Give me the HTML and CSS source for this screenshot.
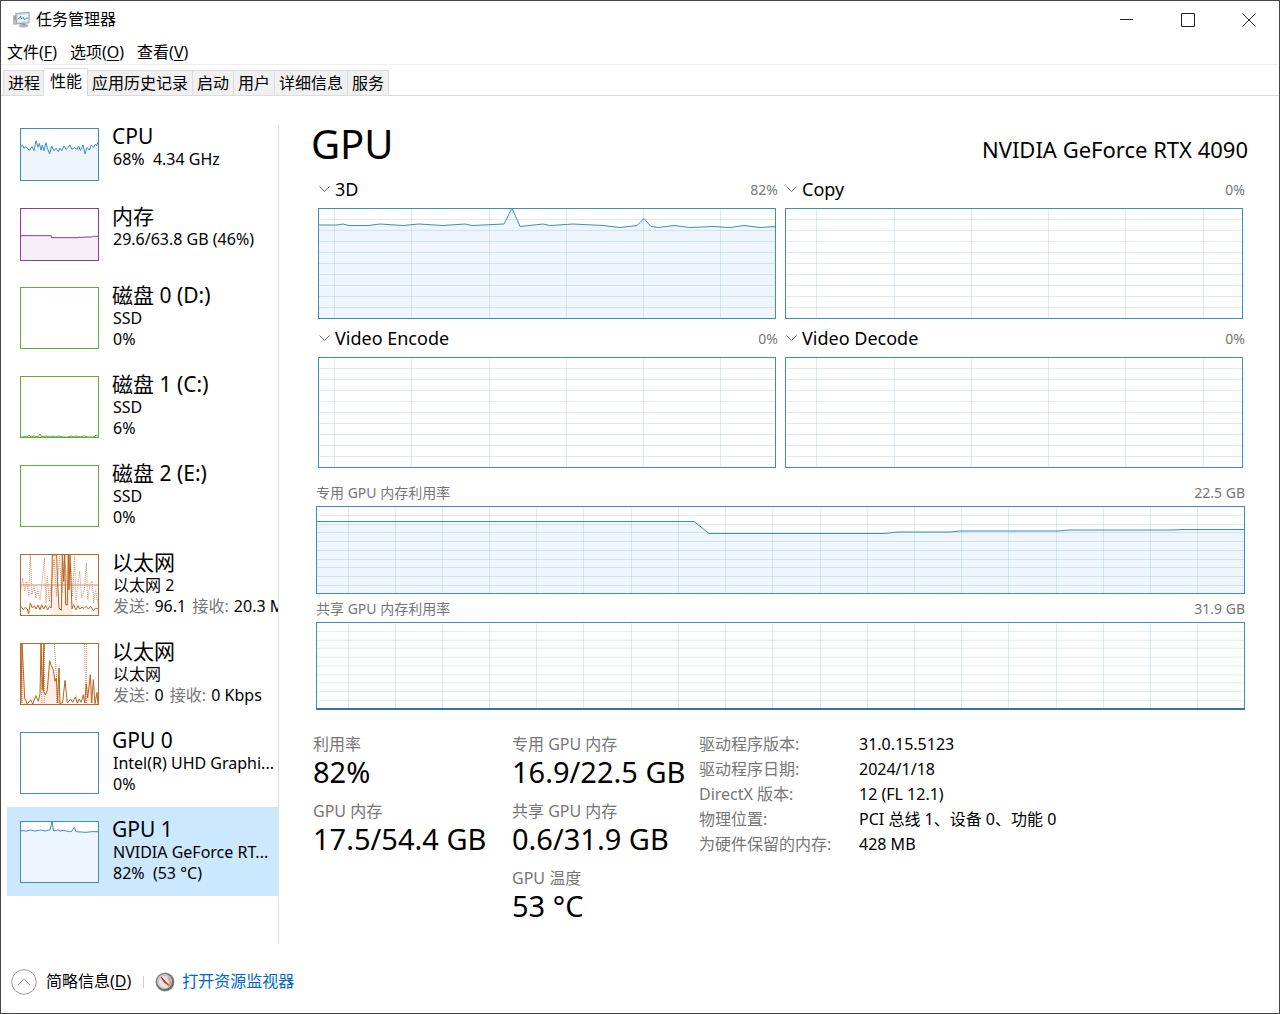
FILE: index.html
```html
<!DOCTYPE html>
<html lang="zh-CN">
<head>
<meta charset="utf-8">
<meta name="viewport" content="width=device-width, initial-scale=1">
<title>任务管理器</title>
<link rel="stylesheet" href="styles.css">
</head>
<body>
<div class="window">
  <header class="titlebar">
    <svg class="app-icon" viewBox="0 0 20 18" aria-hidden="true">
      <path d="M1 4h4v10H1z" fill="#b9bcbe"/><path d="M2 6h2M2 8h2" stroke="#777"/>
      <path d="M4 2l14-1v11L5 13z" fill="#d5d9dc" stroke="#9a9fa3"/>
      <path d="M6 4l11-1v7L6 11z" fill="#e9f7fd"/>
      <path d="M6 8l2-1 1-2 1 3 2-2 1 3 2-2 2 0" fill="none" stroke="#2a93c9"/>
      <ellipse cx="12" cy="15" rx="5" ry="2" fill="#b5b8ba"/><path d="M10 12h4v3h-4z" fill="#9fa3a6"/>
    </svg>
    <h1 class="app-title">任务管理器</h1>
    <div class="window-buttons">
      <button class="window-button" aria-label="最小化"><svg viewBox="0 0 14 14"><path d="M0 6.500h13"/></svg></button>
      <button class="window-button" aria-label="最大化"><svg viewBox="0 0 14 14"><path d="M.5.5h13v13H.5z"/></svg></button>
      <button class="window-button" aria-label="关闭"><svg viewBox="0 0 14 14"><path d="M.5.5l13 13M13.500.5l-13 13"/></svg></button>
    </div>
  </header>

  <nav class="menubar" aria-label="菜单">
    <button>文件(<u>F</u>)</button>
    <button>选项(<u>O</u>)</button>
    <button>查看(<u>V</u>)</button>
  </nav>

  <div class="tabs" role="tablist">
    <button role="tab">进程</button>
    <button role="tab" class="active" aria-selected="true">性能</button>
    <button role="tab">应用历史记录</button>
    <button role="tab">启动</button>
    <button role="tab">用户</button>
    <button role="tab">详细信息</button>
    <button role="tab">服务</button>
  </div>

  <div class="content">
    <aside class="sidebar">
      <button class="device">
        <svg class="thumb short blue" viewBox="63 57 231 153" preserveAspectRatio="none">
          <path class="area" d="M60 115H297V213H60z"/>
          <path class="line" d="M60 113L68 105 72 115 78 110 84 118 90 120 96 110 102 122 108 92 114 112 118 100 123 120 127 105 132 122 138 98 143 118 149 132 155 108 162 122 168 115 175 125 180 115 185 122 192 108 198 118 205 112 210 105 216 118 224 112 230 118 236 108 241 122 249 105 255 132 261 112 268 120 274 105 280 112 286 102 290 108 294 96"/>
        </svg>
        <span class="device-text"><strong>CPU</strong><span>68%&nbsp; 4.34 GHz</span></span>
      </button>
      <button class="device">
        <svg class="thumb short purple" viewBox="63 296 231 153" preserveAspectRatio="none">
          <path class="area" d="M60 376H154V382H234L280 378H297V452H60z"/>
          <path class="line" d="M60 376H154V382H234V381L275 380 280 378H297"/>
        </svg>
        <span class="device-text"><strong>内存</strong><span>29.6/63.8 GB (46%)</span></span>
      </button>
      <button class="device">
        <svg class="thumb green" viewBox="0 0 77 60"></svg>
        <span class="device-text"><strong>磁盘 0 (D:)</strong><span>SSD</span><span>0%</span></span>
      </button>
      <button class="device">
        <svg class="thumb green" viewBox="0 0 77 60" preserveAspectRatio="none">
          <path class="line" d="M0 60L2 60 4 59 6 60 8 58 10 60 13 59 17 60 19 57 21 60 25 59 29 60 31 59 35 60 37 59 43 60 47 60 50 59 53 60 55 59 59 60 63 59 67 60 73 60 75 58 77 59"/>
        </svg>
        <span class="device-text"><strong>磁盘 1 (C:)</strong><span>SSD</span><span>6%</span></span>
      </button>
      <button class="device">
        <svg class="thumb green" viewBox="0 0 77 60"></svg>
        <span class="device-text"><strong>磁盘 2 (E:)</strong><span>SSD</span><span>0%</span></span>
      </button>
      <button class="device">
        <svg class="thumb orange" viewBox="63 46 231 180" preserveAspectRatio="none">
          <path class="area" d="M154 226V46H170L177 210 184 212 186 46H210L216 226z"/>
          <path class="rule" d="M60 136H297"/>
          <path class="dotted" d="M63 150L68 115 74 155 80 125 86 170 91 46 96 165 102 140 108 175 114 150 120 180 127 120 133 55 138 190 142 110 148 185 156 120 162 60 170 170 178 50 186 160 193 50 204 150 212 70 218 170 224 50 228 185 234 130 239 95 245 175 253 150 259 70 263 180 270 130 277 125 281 190 287 150 294 195"/>
          <path class="line" d="M63 200L70 210 76 203 82 208 86 222 91 190 97 205 103 198 108 208 114 196 120 210 125 195 131 208 137 197 143 210 149 200 154 205 157 46H170L172 110 177 205 184 212 187 46 191 125 194 46 197 195 202 196 205 46 207 150 210 46 216 208 221 195 228 210 234 198 239 208 246 203 252 206 258 200 265 208 272 200 280 212 287 206 294 208"/>
        </svg>
        <span class="device-text"><strong>以太网</strong><span>以太网 2</span><span><i>发送:</i> 96.1 <i>接收:</i> 20.3 Mbps</span></span>
      </button>
      <button class="device">
        <svg class="thumb orange" viewBox="63 313 231 180" preserveAspectRatio="none">
          <path class="area" d="M63 493V313H68L76 493zM118 493L122 313H127L132 460 140 465 149 363 160 390 170 430 178 493zM250 493L257 430 263 480 271 405 280 493z"/>
          <path class="dotted" d="M66 313V493M125 313V493M133 313V493M163 313L170 420V493M178 380V493M228 465L235 490M254 313L257 493M260 313V493"/>
          <path class="line" d="M63 490L66 313 70 390 74 475 82 493 92 480 98 493 108 468 115 485 120 462 123 313 127 450 132 313 130 455 137 465 142 450 149 363 154 378 160 390 165 425 169 415 173 490 177 385 180 492 188 488 195 422 202 490 212 478 218 488 226 472 232 490 238 478 243 488 250 465 254 490 259 432 263 475 271 405 275 490 280 420 285 492 291 458 294 493"/>
        </svg>
        <span class="device-text"><strong>以太网</strong><span>以太网</span><span><i>发送:</i> 0 <i>接收:</i> 0 Kbps</span></span>
      </button>
      <button class="device">
        <svg class="thumb blue" viewBox="0 0 77 60"></svg>
        <span class="device-text"><strong>GPU 0</strong><span>Intel(R) UHD Graphi...</span><span>0%</span></span>
      </button>
      <button class="device selected" aria-current="true">
        <svg class="thumb blue" viewBox="63 307 231 180" preserveAspectRatio="none">
          <path class="area" d="M60 333H150L156 305 161 333H218L223 323 228 336H297V490H60z"/>
          <path class="line" d="M60 333L80 334 92 331 105 334 122 331 135 334 145 331 150 332 156 305 161 334 173 331 180 334 190 332 208 336 216 334 223 323 228 336 258 338 275 336 297 336"/>
        </svg>
        <span class="device-text"><strong>GPU 1</strong><span>NVIDIA GeForce RT...</span><span>82%&nbsp; (53 °C)</span></span>
      </button>
    </aside>

    <main class="details">
      <div class="heading">
        <h2>GPU</h2>
        <p>NVIDIA GeForce RTX 4090</p>
      </div>

      <div class="engines">
        <section class="engine">
          <div class="engine-head"><button><svg class="chevron" viewBox="0 0 11 7"><path d="M.5.5l5 5 5-5"/></svg>3D</button><span>82%</span></div>
          <svg class="chart" viewBox="1 1 456 109" preserveAspectRatio="none">
            <path class="area" d="M0 17L19 17 25 16 31 17.500 50 17.500 62 16 85 17.500 101 16 125 17.500 147 16 154 17.500 186 16 194 0 202 18.500 225 16 232 17.500 255 16 285 17.500 302 19.500 319 17.500 326 10.500 333 18.500 340 19.500 356 17.500 372 19.500 395 18.500 412 19.500 426 17.500 442 19.500 458 18.500V111H0z"/>
            <path class="grid" d="M0 11.500H458M0 22.500H458M0 33.500H458M0 44.500H458M0 55.500H458M0 66.500H458M0 77.500H458M0 88.500H458M0 99.500H458M16.500 0V111M93.500 0V111M171.500 0V111M248.500 0V111M325.500 0V111M402.500 0V111"/>
            <path class="line" d="M0 17L19 17 25 16 31 17.500 50 17.500 62 16 85 17.500 101 16 125 17.500 147 16 154 17.500 186 16 194 0 202 18.500 225 16 232 17.500 255 16 285 17.500 302 19.500 319 17.500 326 10.500 333 18.500 340 19.500 356 17.500 372 19.500 395 18.500 412 19.500 426 17.500 442 19.500 458 18.500"/>
          </svg>
        </section>
        <section class="engine">
          <div class="engine-head"><button><svg class="chevron" viewBox="0 0 11 7"><path d="M.5.5l5 5 5-5"/></svg>Copy</button><span>0%</span></div>
          <svg class="chart" viewBox="1 1 456 109" preserveAspectRatio="none">
            <path class="grid" d="M0 11.500H458M0 22.500H458M0 33.500H458M0 44.500H458M0 55.500H458M0 66.500H458M0 77.500H458M0 88.500H458M0 99.500H458M31.500 0V111M109.500 0V111M186.500 0V111M263.500 0V111M340.500 0V111M418.500 0V111"/>
          </svg>
        </section>
        <section class="engine">
          <div class="engine-head"><button><svg class="chevron" viewBox="0 0 11 7"><path d="M.5.5l5 5 5-5"/></svg>Video Encode</button><span>0%</span></div>
          <svg class="chart" viewBox="1 1 456 109" preserveAspectRatio="none">
            <path class="grid" d="M0 11.500H458M0 22.500H458M0 33.500H458M0 44.500H458M0 55.500H458M0 66.500H458M0 77.500H458M0 88.500H458M0 99.500H458M16.500 0V111M93.500 0V111M171.500 0V111M248.500 0V111M325.500 0V111M402.500 0V111"/>
          </svg>
        </section>
        <section class="engine">
          <div class="engine-head"><button><svg class="chevron" viewBox="0 0 11 7"><path d="M.5.5l5 5 5-5"/></svg>Video Decode</button><span>0%</span></div>
          <svg class="chart" viewBox="1 1 456 109" preserveAspectRatio="none">
            <path class="grid" d="M0 11.500H458M0 22.500H458M0 33.500H458M0 44.500H458M0 55.500H458M0 66.500H458M0 77.500H458M0 88.500H458M0 99.500H458M31.500 0V111M109.500 0V111M186.500 0V111M263.500 0V111M340.500 0V111M418.500 0V111"/>
          </svg>
        </section>
      </div>

      <div class="memory">
        <div class="memory-head"><span>专用 GPU 内存利用率</span><span>22.5 GB</span></div>
        <svg class="chart wide" viewBox="1 1 927 86" preserveAspectRatio="none">
          <path class="area" d="M0 15.500H378L393 27.500H569L582 26H634L644 25H741L754 24H857L867 23.500H930V90H0z"/>
          <path class="grid" d="M0 9.500H929M0 18.500H929M0 26.500H929M0 35.500H929M0 44.500H929M0 53.500H929M0 61.500H929M0 70.500H929M0 79.500H929M32.500 0V88M79.500 0V88M126.500 0V88M173.500 0V88M220.500 0V88M267.500 0V88M315.500 0V88M362.500 0V88M409.500 0V88M456.500 0V88M504.500 0V88M551.500 0V88M598.500 0V88M645.500 0V88M692.500 0V88M740.500 0V88M787.500 0V88M834.500 0V88M881.500 0V88"/>
          <path class="line" d="M0 15.500H378L393 27.500H569L582 26H634L644 25H741L754 24H857L867 23.500H930"/>
        </svg>
        <div class="memory-head"><span>共享 GPU 内存利用率</span><span>31.9 GB</span></div>
        <svg class="chart wide shared" viewBox="1 1 927 86" preserveAspectRatio="none">
          <path class="grid" d="M0 9.500H929M0 18.500H929M0 26.500H929M0 35.500H929M0 44.500H929M0 53.500H929M0 61.500H929M0 70.500H929M0 79.500H929M32.500 0V88M79.500 0V88M126.500 0V88M173.500 0V88M220.500 0V88M267.500 0V88M315.500 0V88M362.500 0V88M409.500 0V88M456.500 0V88M504.500 0V88M551.500 0V88M598.500 0V88M645.500 0V88M692.500 0V88M740.500 0V88M787.500 0V88M834.500 0V88M881.500 0V88"/>
        </svg>
      </div>

      <div class="stats">
        <dl class="figures">
          <dt>利用率</dt><dd>82%</dd>
          <dt>GPU 内存</dt><dd>17.5/54.4 GB</dd>
        </dl>
        <dl class="figures">
          <dt>专用 GPU 内存</dt><dd>16.9/22.5 GB</dd>
          <dt>共享 GPU 内存</dt><dd>0.6/31.9 GB</dd>
          <dt>GPU 温度</dt><dd>53 °C</dd>
        </dl>
        <table class="facts">
          <tbody>
            <tr><th scope="row">驱动程序版本:</th><td>31.0.15.5123</td></tr>
            <tr><th scope="row">驱动程序日期:</th><td>2024/1/18</td></tr>
            <tr><th scope="row">DirectX 版本:</th><td>12 (FL 12.1)</td></tr>
            <tr><th scope="row">物理位置:</th><td>PCI 总线 1、设备 0、功能 0</td></tr>
            <tr><th scope="row">为硬件保留的内存:</th><td>428 MB</td></tr>
          </tbody>
        </table>
      </div>
    </main>
  </div>

  <footer class="footer">
    <button class="fewer">
      <svg viewBox="0 0 26 26" aria-hidden="true"><circle cx="13" cy="13" r="12.300"/><path d="M7 16l6-6 6 6"/></svg>
      <span>简略信息(<u>D</u>)</span>
    </button>
    <a class="monitor" href="#resource-monitor">
      <svg viewBox="0 0 20 20" aria-hidden="true">
        <circle cx="10" cy="10" r="9.500" fill="#9a9a98"/><circle cx="10" cy="10" r="8.800" fill="#6b6c6a"/>
        <circle cx="9.500" cy="9.500" r="7.500" fill="#c9c9c6"/><circle cx="10" cy="10" r="6" fill="#e8e3de"/>
        <path d="M13 5.500a6 6 0 0 1 0 9" fill="none" stroke="#dd9a7a" stroke-width="2"/>
        <path d="M6 5l7.500 8-4-2.500z" fill="#c9302c" stroke="#c9302c"/>
      </svg>
      <span>打开资源监视器</span>
    </a>
  </footer>
</div>
</body>
</html>
```
FILE: styles.css
```css
* {
  box-sizing: border-box;
}

body {
  margin: 0;
  background: #fff;
  color: #000;
  font: 16px/21px "Noto Sans", "Noto Sans CJK SC", sans-serif;
}

h1, h2, p, dl, dd {
  margin: 0;
  font-weight: 400;
}

button {
  padding: 0;
  border: 0;
  background: none;
  color: inherit;
  font: inherit;
  text-align: left;
}

u {
  text-underline-offset: 2px;
}

.window {
  display: flex;
  flex-direction: column;
  min-height: 100vh;
  border: 1px solid #464446;
}

/* Title bar */

.titlebar {
  display: flex;
  align-items: center;
  height: 37px;
  padding-left: 11px;
}

.app-icon {
  width: 19px;
  height: 18px;
}

.app-title {
  margin-left: 5px;
  font-size: 16px;
}

.window-buttons {
  display: flex;
  margin-left: auto;
}

.window-button {
  display: flex;
  align-items: center;
  justify-content: center;
  width: 61px;
  height: 37px;
}

.window-button svg {
  width: 14px;
  height: 14px;
  fill: none;
  stroke: #222;
}

/* Menu and tabs */

.menubar {
  display: flex;
  gap: 13px;
  height: 27px;
  padding: 3px 6px 0;
  border-bottom: 1px solid #eee;
}

.tabs {
  display: flex;
  align-items: flex-end;
  height: 31px;
  padding-left: 2px;
  border-bottom: 1px solid #dcdcdc;
}

.tabs button {
  height: 25px;
  padding: 0 4px;
  border: solid #dcdcdc;
  border-width: 1px 1px 0 0;
  background: #f0f0f0;
}

.tabs button:first-child {
  padding-right: 3px;
  border-left-width: 1px;
}

.tabs .active {
  height: 28px;
  margin-bottom: -1px;
  padding: 0 5px 3px 6px;
  background: #fff;
}

/* Device list */

.content {
  display: flex;
  flex: 1;
  padding-top: 30px;
}

.sidebar {
  flex: none;
  width: 278px;
  padding-left: 6px;
  border-right: 1px solid #dedede;
}

.device {
  display: flex;
  width: 100%;
  padding: 9px 0 12px 13px;
  overflow: hidden;
}

.device:first-child {
  margin-top: -12px;
  padding-bottom: 13px;
}

.device.selected {
  background: #cce8ff;
}

.device-text {
  flex: 1;
  min-width: 0;
  padding-left: 14px;
  white-space: nowrap;
}

.device-text strong,
.device-text span {
  display: block;
}

.device-text strong {
  margin-left: -1px;
  font-size: 21px;
  font-weight: 400;
  line-height: 26px;
}

.device-text i {
  margin-right: 1px;
  color: #767676;
  font-style: normal;
}

.device-text i + i {
  margin-left: 2px;
}

.thumb {
  flex: none;
  width: 79px;
  height: 62px;
  margin-top: 5px;
  border: 1px solid;
  background: #fff;
}

.thumb.short {
  height: 53px;
}

.blue {
  border-color: #3a8fbf;
  color: #3a8fbf;
}

.purple {
  border-color: #9437a5;
  color: #9437a5;
}

.purple .area {
  fill: #f4f0f6;
}

.green {
  border-color: #62ab37;
  color: #62ab37;
}

.orange {
  border-color: #b96a2b;
  color: #b5651d;
}

.orange .area {
  fill: #fbeee6;
}

.dotted,
.rule {
  fill: none;
  stroke: #dd8a66;
  stroke-width: 1px;
  vector-effect: non-scaling-stroke;
}

.dotted {
  stroke-dasharray: 1 1;
}

/* Charts */

.area {
  fill: #eef5fc;
}

.line {
  fill: none;
  stroke: currentColor;
  vector-effect: non-scaling-stroke;
}

.grid {
  fill: none;
  stroke: #5f9cb8;
  stroke-opacity: 0.2;
  vector-effect: non-scaling-stroke;
}

.chart {
  display: block;
  width: 100%;
  height: 111px;
  border: 1px solid #3b8ebf;
  color: #3b8ebf;
}

.chart.wide {
  height: 88px;
}

.chart.shared {
  border-bottom: 2px solid #2b77a8;
}

/* Detail pane */

.details {
  flex: 1;
  min-width: 0;
  padding: 0 34px 0 37px;
}

.heading {
  display: flex;
  align-items: center;
  justify-content: space-between;
  height: 44px;
  margin: 0 -3px 0 -5px;
}

.heading h2 {
  padding-bottom: 8px;
  font-size: 40px;
  line-height: 40px;
}

.heading p {
  padding-top: 2px;
  font-size: 22px;
  line-height: 30px;
}

.engines {
  display: grid;
  grid-template-columns: 1fr 1fr;
  column-gap: 7px;
  padding-left: 2px;
}

.engine .chart {
  width: calc(100% - 2px);
}

.engine-head {
  display: flex;
  align-items: center;
  justify-content: space-between;
  height: 38px;
  color: #767676;
  font-size: 14px;
}

.engine-head button {
  display: flex;
  align-items: center;
  gap: 5px;
  padding-left: 1px;
  color: #000;
  font-size: 18px;
}

.chevron {
  width: 11px;
  height: 7px;
  fill: none;
  stroke: #666;
}

.memory {
  padding-top: 10px;
}

.memory-head {
  display: flex;
  justify-content: space-between;
  height: 28px;
  padding-top: 4px;
  color: #767676;
  font-size: 14px;
}

.stats {
  display: grid;
  grid-template-columns: 199px 187px 1fr;
  margin-left: -3px;
  padding-top: 22px;
}

.figures dt {
  color: #767676;
  line-height: 24px;
}

.figures dd {
  margin-bottom: 11px;
  font-size: 29px;
  line-height: 32px;
  white-space: nowrap;
}

.facts {
  justify-self: start;
  align-self: start;
  border-collapse: collapse;
  line-height: 25px;
}

.facts th {
  width: 160px;
  padding: 0;
  color: #767676;
  font-weight: 400;
  text-align: left;
}

.facts td {
  padding: 0;
}

/* Footer */

.footer {
  display: flex;
  align-items: center;
  height: 69px;
  padding: 6px 10px 0;
}

.fewer,
.monitor {
  display: flex;
  align-items: center;
}

.fewer {
  gap: 9px;
  padding-right: 12px;
}

.fewer svg {
  width: 26px;
  height: 26px;
  fill: none;
  stroke: #999;
}

.monitor {
  gap: 7px;
  color: #0066cc;
  text-decoration: none;
}

.monitor::before {
  width: 1px;
  height: 12px;
  margin-right: 4px;
  background: #ccc;
  content: "";
}

.monitor svg {
  width: 20px;
  height: 20px;
}
```
